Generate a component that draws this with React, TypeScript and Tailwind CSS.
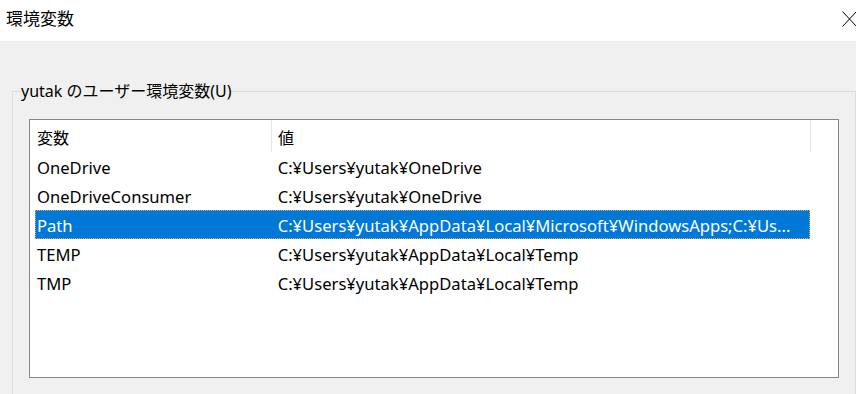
import React from 'react';

const rows = [
  { name: 'OneDrive', value: 'C:¥Users¥yutak¥OneDrive' },
  { name: 'OneDriveConsumer', value: 'C:¥Users¥yutak¥OneDrive' },
  { name: 'Path', value: 'C:¥Users¥yutak¥AppData¥Local¥Microsoft¥WindowsApps;C:¥Us...', selected: true },
  { name: 'TEMP', value: 'C:¥Users¥yutak¥AppData¥Local¥Temp' },
  { name: 'TMP', value: 'C:¥Users¥yutak¥AppData¥Local¥Temp' },
];

const font = "font-['Noto_Sans','Noto_Sans_CJK_JP',sans-serif]";

export default function App() {
  return (
    <div className={`w-[856px] h-[394px] overflow-hidden bg-[#f0f0f0] text-[16px] text-black ${font}`}>
      {/* title bar */}
      <div className="h-[41px] bg-white flex items-start justify-between">
        <div className="pl-[6px] pt-[7px] leading-[24px] text-[17px]">環境変数</div>
        <svg width="15" height="16" viewBox="0 0 15 16" className="mt-[11px] mr-[-1px]">
          <path d="M0.5 0.5 L14.5 15.5 M14.5 0.5 L0.5 15.5" stroke="#000" strokeWidth="1" fill="none" />
        </svg>
      </div>

      <fieldset className="mt-[38px] ml-[12px] w-[844px] h-[400px] border border-[#dcdcdc]">
        <legend className="ml-[8px] leading-[24px]">yutak のユーザー環境変数(U)</legend>
        <div className="mt-[16px] mx-[16px] w-[810px] h-[259px] border border-[#828790] bg-white">
          {/* header */}
          <div className="flex h-[32px]">
            <div className="w-[241px] pl-[7px] pt-[4px] flex items-center">変数</div>
            <div className="w-[1px] h-[32px] bg-[#e5e5e5]" />
            <div className="w-[538px] pl-[6px] pt-[4px] flex items-center">値</div>
            <div className="w-[1px] h-[32px] bg-[#e5e5e5]" />
          </div>
          {/* rows */}
          <div className="pl-[5px] text-[16.6px]">
            {rows.map((r) => (
              <div
                key={r.name}
                className={`flex w-[775px] h-[29px] pt-[3px] items-center whitespace-nowrap ${
                  r.selected ? 'bg-[#0078d7] text-white border border-dotted border-[#d9a86a]' : 'border border-transparent'
                }`}
              >
                <div className="w-[236px] pl-[1px] overflow-hidden">{r.name}</div>
                <div className="w-[538px] pl-[6px] overflow-hidden">{r.value}</div>
              </div>
            ))}
          </div>
        </div>
      </fieldset>
    </div>
  );
}
